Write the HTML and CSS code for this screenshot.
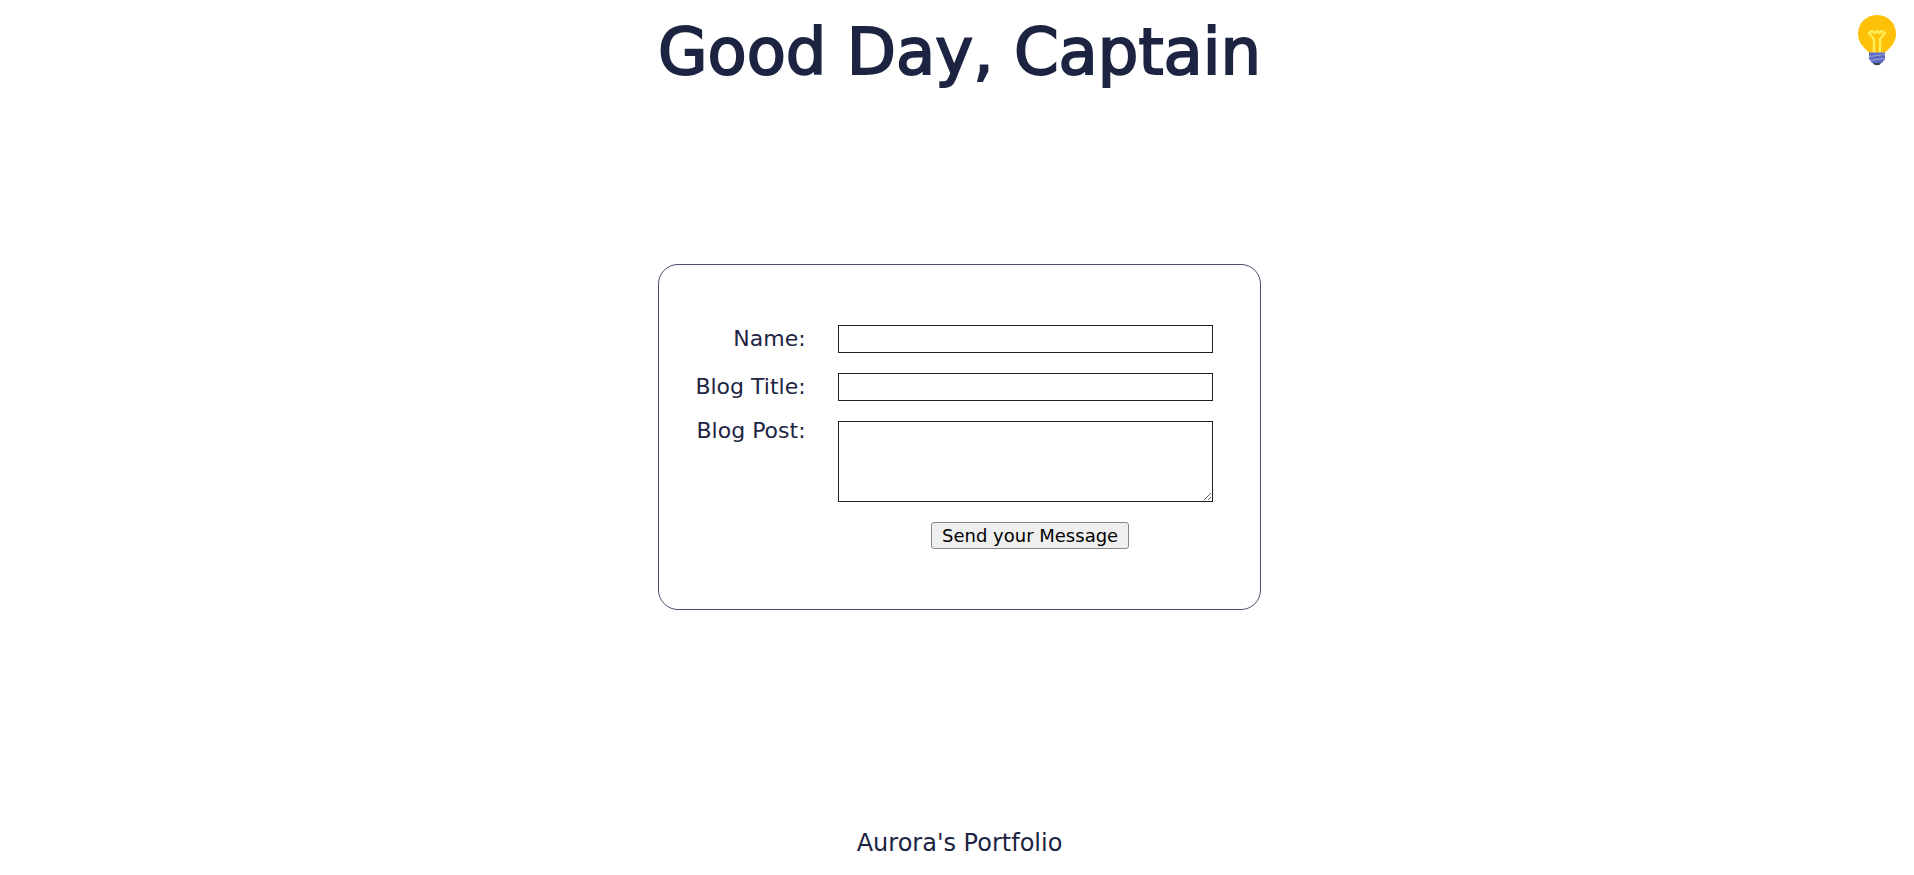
FILE: index.html
```html
<!DOCTYPE html>
<html lang="en">
<head>
<meta charset="utf-8">
<title>Good Day, Captain</title>
<link rel="stylesheet" href="styles.css">
</head>
<body>
<button class="theme-toggle" type="button" aria-label="Toggle theme">
<svg viewBox="0 0 40 52" width="40" height="52" aria-hidden="true">
<path fill="#ffc107" d="M20 0C9 0 1 8.500 1 19C1 27 6 32 12 37.500H28C34 32 39 27 39 19C39 8.500 31 0 20 0Z"/>
<path fill="none" stroke="#ffee58" stroke-width="2.500" stroke-linejoin="round" d="M17 37V24L12 18L15 16L17.500 18L20 16L22.500 18L25 16L28 18L23 24V37"/>
<path fill="#5c6bc0" d="M12 37.500H28V44L25 48H15L12 44Z"/>
<path stroke="#9fa8da" stroke-width="1" d="M12 41.500L28 39.500M13 45.500L27 43.500"/>
<path fill="#37474f" d="M16 48H24C23.500 51 16.500 51 16 48Z"/>
</svg>
</button>
<h1 class="title">Good Day, Captain</h1>
<main class="main">
<form class="card">
<label class="label" for="name">Name:</label>
<input class="field" id="name" type="text">
<label class="label" for="blog-title">Blog Title:</label>
<input class="field" id="blog-title" type="text">
<label class="label label-post" for="post">Blog Post:</label>
<textarea class="field area" id="post"></textarea>
<button class="send" type="submit">Send your Message</button>
</form>
</main>
<footer class="footer">Aurora's Portfolio</footer>
</body>
</html>
```
FILE: styles.css
```css
* {
  box-sizing: border-box;
}

body {
  margin: 0;
  padding: 10px 0 20px 5px;
  min-height: 100vh;
  display: flex;
  flex-direction: column;
  align-items: center;
  background: #fff;
  color: #1d2442;
  font-family: "DejaVu Sans", sans-serif;
  font-size: 22px;
  line-height: 24px;
}

.theme-toggle {
  position: absolute;
  top: 15px;
  right: 17px;
  padding: 0;
  border: 0;
  background: none;
  cursor: pointer;
}

.theme-toggle svg {
  display: block;
}

.title {
  margin: 0;
  font-size: 64px;
  font-weight: 400;
  line-height: 84px;
  -webkit-text-stroke: 2px #1d2442;
}

.main {
  margin-top: 170px;
}

.card {
  display: grid;
  grid-template-columns: auto 375px;
  gap: 20px 32px;
  padding: 60px 47px 60px 36px;
  border: 1px solid #484f6a;
  border-radius: 20px;
}

.label {
  justify-self: end;
  align-self: center;
}

.label-post {
  align-self: start;
  line-height: 20px;
}

.field {
  width: 100%;
  height: 28px;
  margin: 0;
  border: 1px solid #222;
  background: #fff;
  font: inherit;
}

.area {
  display: block;
  height: 81px;
  resize: both;
}

.send {
  grid-column: 2;
  justify-self: center;
  height: 27px;
  margin: 0 0 0 10px;
  padding: 0 10px;
  border: 1px solid #888;
  border-radius: 3px;
  background: #efefef;
  color: #000;
  font: inherit;
  font-size: 18px;
  line-height: 24px;
}

.footer {
  margin-top: auto;
  font-size: 24px;
}
```
